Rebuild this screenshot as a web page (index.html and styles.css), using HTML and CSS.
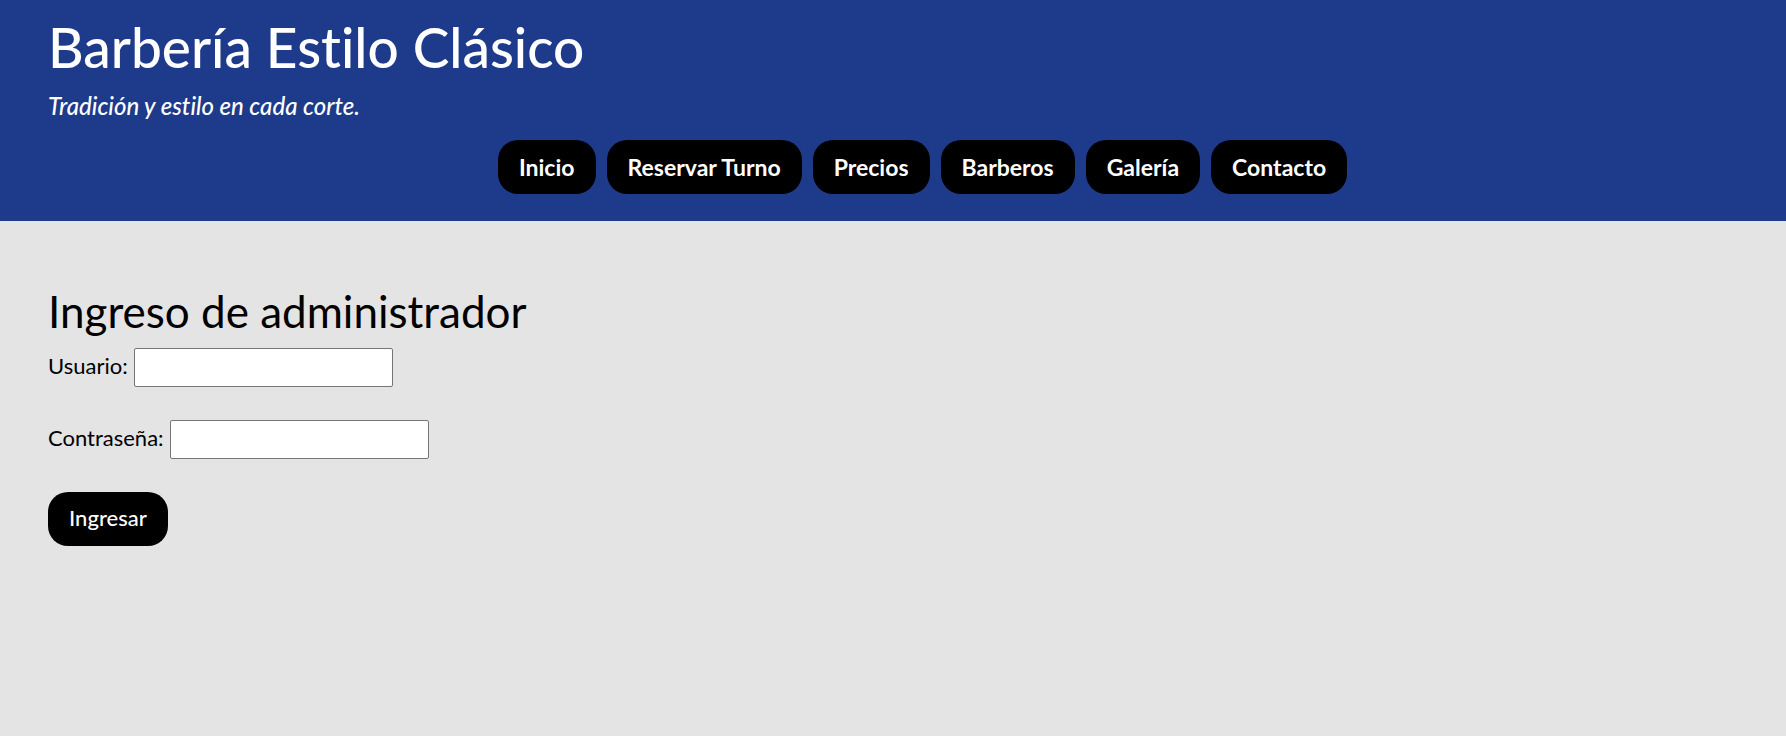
FILE: index.html
```html
<!DOCTYPE html>
<html lang="es">
<head>
  <meta charset="utf-8">
  <meta name="viewport" content="width=device-width, initial-scale=1">
  <title>Barbería Estilo Clásico</title>
  <link rel="stylesheet" href="styles.css">
</head>
<body>
  <header class="site-header">
    <h1 class="site-title">Barbería Estilo Clásico</h1>
    <p class="tagline">Tradición y estilo en cada corte.</p>
    <nav>
      <ul class="menu">
        <li><a class="pill" href="#inicio">Inicio</a></li>
        <li><a class="pill" href="#reservar">Reservar Turno</a></li>
        <li><a class="pill" href="#precios">Precios</a></li>
        <li><a class="pill" href="#barberos">Barberos</a></li>
        <li><a class="pill" href="#galeria">Galería</a></li>
        <li><a class="pill" href="#contacto">Contacto</a></li>
      </ul>
    </nav>
  </header>
  <main class="login">
    <h2 class="login-title">Ingreso de administrador</h2>
    <form class="login-form">
      <div class="field">
        <label for="usuario">Usuario:</label>
        <input class="field-input" type="text" id="usuario" name="usuario">
      </div>
      <div class="field">
        <label for="clave">Contraseña:</label>
        <input class="field-input" type="password" id="clave" name="clave">
      </div>
      <button class="pill submit" type="submit">Ingresar</button>
    </form>
  </main>
</body>
</html>
```
FILE: styles.css
```css
* {
  box-sizing: border-box;
}

body {
  margin: 0;
  background: #e4e4e4;
  color: #000;
  font-family: "Trebuchet MS", Lato, sans-serif;
  font-size: 22px;
  font-variant-ligatures: none;
  line-height: 28px;
}

.site-header {
  padding: 16px 48px 27px;
  background: #1e3a8a;
  color: #fff;
}

.site-title {
  margin: 0;
  font-size: 55px;
  font-weight: 500;
  line-height: 62px;
}

.tagline {
  margin: 14px 0 20px;
  font-size: 24px;
  font-style: italic;
  font-weight: 500;
}

.menu {
  display: flex;
  flex-wrap: wrap;
  justify-content: center;
  gap: 11px;
  margin: 0;
  padding: 0 0 0 59px;
  list-style: none;
}

.pill {
  display: block;
  padding: 13px 21px;
  border: 0;
  border-radius: 20px;
  background: #000;
  color: #fff;
  font: inherit;
  font-size: 23px;
  font-weight: 700;
  text-decoration: none;
}

.login {
  padding: 62px 48px;
}

.login-title {
  margin: 0 0 9px;
  font-size: 44px;
  font-weight: 400;
  line-height: 56px;
}

.login-form {
  display: flex;
  flex-direction: column;
  align-items: flex-start;
  gap: 33px;
}

.field {
  display: flex;
  align-items: flex-start;
  gap: 6px;
}

.field label {
  padding-top: 4px;
}

.field-input {
  width: 259px;
  height: 39px;
  padding: 1px 2px;
  border: 1px solid #767676;
  border-radius: 2px;
  background: #fff;
  font: inherit;
}

.submit {
  padding: 12px 21px 14px;
  font-size: 22px;
  font-weight: 500;
  cursor: pointer;
}
```
